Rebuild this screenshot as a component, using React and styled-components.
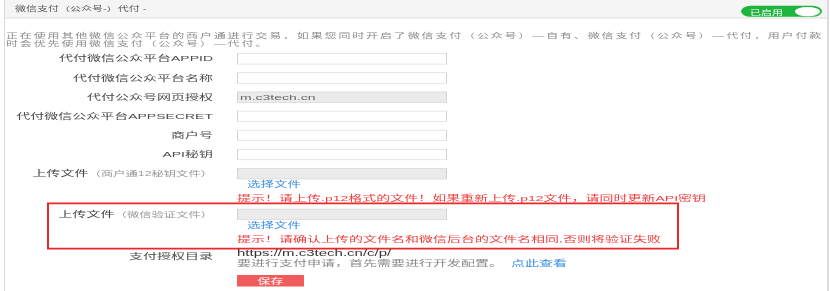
import React from "react";
import styled, { createGlobalStyle } from "styled-components";

const GlobalStyle = createGlobalStyle`
	html, body {
		margin: 0;
		padding: 0;
		background: #fff;
		overflow: hidden;
	}
	body {
		font-family: "Liberation Sans", "Noto Sans CJK SC", sans-serif;
	}
`;

const Frame = styled.div`
	width: 830px;
	height: 291px;
	overflow: hidden;
`;

// the reference is squashed vertically, so the page is laid out at full height and scaled
const Page = styled.div`
	width: 830px;
	height: 502px;
	transform: scaleY(0.58);
	transform-origin: 0 0;
`;

const Panel = styled.section`
	box-sizing: border-box;
	margin-left: 4px;
	width: 825px;
	height: 100%;
	border-left: 1px solid #d9d9d9;
	border-right: 2px solid #dcdcdc;
`;

const Header = styled.header`
	display: flex;
	justify-content: space-between;
	align-items: flex-start;
	height: 30px;
	padding: 0 5px 0 10px;
	background: #f5f5f5;
	border-bottom: 2px solid #e4e4e4;
`;

const Title = styled.h3`
	margin: 0;
	font-size: 11px;
	font-weight: normal;
	line-height: 30px;
	color: #5a5a5a;
`;

const Toggle = styled.div`
	box-sizing: border-box;
	display: flex;
	align-items: center;
	justify-content: space-between;
	margin-top: 10px;
	width: 81px;
	height: 19px;
	padding: 0 2px 0 9px;
	border-radius: 10px;
	background: #1fb53c;
`;

const ToggleText = styled.span`
	font-size: 11px;
	color: #fff;
`;

const Knob = styled.span`
	width: 25px;
	height: 16px;
	border-radius: 50%;
	background: #fff;
`;

const Intro = styled.p`
	margin: 23px 0 0;
	padding-left: 1px;
	font-size: 12px;
	letter-spacing: 1.85px;
	line-height: 14px;
	color: #8c8c8c;
`;

const Form = styled.div`
	display: flex;
	flex-direction: column;
	margin-top: 9px;
`;

const Field = styled.div`
	position: relative;
	display: grid;
	grid-template-columns: 208px 1fr;
	column-gap: 24px;
	align-items: start;
	margin-top: ${(p) => p.$mt || 0}px;
`;

const Label = styled.div`
	text-align: right;
	font-size: 14px;
	line-height: ${(p) => p.$lh || 19}px;
	margin-top: ${(p) => p.$mt || 0}px;
	color: #4a4a4a;
	white-space: nowrap;
`;

const LabelMain = styled.span`
	font-size: 14px;
	color: #3f3f3f;
`;

const LabelNote = styled.span`
	font-size: 12.3px;
	color: #999;
`;

const Control = styled.div`
	display: flex;
	flex-direction: column;
	align-items: flex-start;
`;

const Input = styled.input`
	box-sizing: border-box;
	width: 210px;
	height: 19px;
	margin: 0;
	padding: 0 2px;
	border: 1px solid #d2d2d2;
	border-top-width: 1.7px;
	border-bottom-width: 1.7px;
	background: ${(p) => (p.$muted ? "#ebebeb" : "#fff")};
	font-family: "Liberation Sans", sans-serif;
	font-size: 14px;
	color: #666;
	outline: none;
`;

const FileLink = styled.span`
	padding-left: 10px;
	font-size: 13.5px;
	line-height: 20px;
	color: #3a8ee6;
`;

const Hint = styled.span`
	margin-top: 3px;
	font-size: 14px;
	line-height: 20px;
	color: #ee3b3b;
	white-space: nowrap;
`;

const Highlight = styled.div`
	position: absolute;
	top: -11px;
	bottom: -8px;
	left: 42px;
	width: 632px;
	box-sizing: border-box;
	border: 2px solid #e8282b;
	border-top-width: 3.5px;
	border-bottom-width: 3.5px;
	pointer-events: none;
`;

const Url = styled.span`
	font-size: 15px;
	line-height: 16px;
	color: #333;
`;

const Note = styled.span`
	font-size: 14px;
	line-height: 16px;
	color: #888;
	white-space: nowrap;
`;

const NoteLink = styled.span`
	margin-left: 8px;
	color: #3a8ee6;
`;

const SaveButton = styled.button`
	width: 67px;
	height: 20px;
	padding: 0;
	border: none;
	border-radius: 1px;
	background: #f25b5b;
	font-family: "Liberation Sans", "Noto Sans CJK SC", sans-serif;
	font-size: 13px;
	color: #fff;
`;

const textFields = [
	{ label: "代付微信公众平台APPID", value: "" },
	{ label: "代付微信公众平台名称", value: "" },
	{ label: "代付公众号网页授权", value: "m.c3tech.cn", muted: true },
	{ label: "代付微信公众平台APPSECRET", value: "" },
	{ label: "商户号", value: "" },
	{ label: "API秘钥", value: "" },
];

const UploadField = ({ note, hint, mt, highlighted }) => (
	<Field $mt={mt}>
		<Label>
			<LabelMain>上传文件</LabelMain>
			<LabelNote>（{note}）</LabelNote>
		</Label>
		<Control>
			<Input $muted readOnly />
			<FileLink>选择文件</FileLink>
			<Hint>{hint}</Hint>
		</Control>
		{highlighted && <Highlight />}
	</Field>
);

export default function App() {
	return (
		<Frame>
			<GlobalStyle />
			<Page>
				<Panel>
					<Header>
						<Title>微信支付（公众号-）代付 -</Title>
						<Toggle>
							<ToggleText>已启用</ToggleText>
							<Knob />
						</Toggle>
					</Header>
					<Intro>
						正在使用其他微信公众平台的商户通进行交易，如果您同时开启了微信支付（公众号）—自有、微信支付（公众号）—代付，用户付款时会优先使用微信支付（公众号）—代付。
					</Intro>
					<Form>
						{textFields.map((f, i) => (
							<Field key={f.label} $mt={i === 0 ? 0 : 14}>
								<Label>{f.label}</Label>
								<Control>
									<Input $muted={f.muted} defaultValue={f.value} readOnly={f.muted} />
								</Control>
							</Field>
						))}
						<UploadField
							mt={14}
							note="商户通12秘钥文件"
							hint="提示！请上传.p12格式的文件！如果重新上传.p12文件，请同时更新API密钥"
						/>
						<UploadField
							mt={8}
							highlighted
							note="微信验证文件"
							hint="提示！请确认上传的文件名和微信后台的文件名相同,否则将验证失败"
						/>
						<Field $mt={7}>
							<Label $lh={16} $mt={5}>
								支付授权目录
							</Label>
							<Control>
								<Url>https://m.c3tech.cn/c/p/</Url>
								<Note>
									要进行支付申请，首先需要进行开发配置。
									<NoteLink>点此查看</NoteLink>
								</Note>
							</Control>
						</Field>
						<Field $mt={13}>
							<span />
							<Control>
								<SaveButton>保存</SaveButton>
							</Control>
						</Field>
					</Form>
				</Panel>
			</Page>
		</Frame>
	);
}
